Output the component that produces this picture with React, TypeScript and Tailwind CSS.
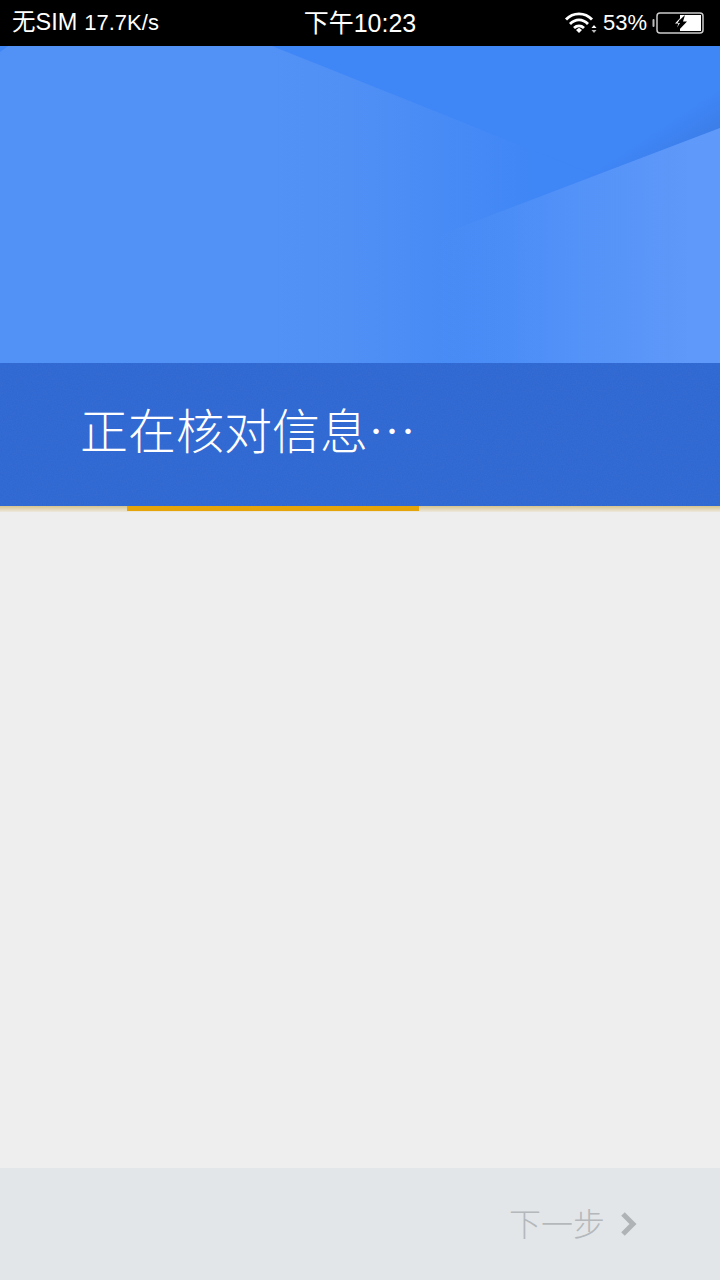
const sans = "font-['Liberation_Sans','Noto_Sans_CJK_SC',sans-serif]";

function WifiIcon() {
  return (
    <svg width="34" height="24" viewBox="0 0 34 24" className="block">
      <path d="M3 8.5C10 1 22 1 29 8.5" fill="none" stroke="#fff" strokeWidth="2.8" />
      <path d="M7 13C12.5 7.5 19.5 7.5 25 13" fill="none" stroke="#fff" strokeWidth="2.8" />
      <path d="M11 17C14 14.2 18 14.2 21 17" fill="none" stroke="#fff" strokeWidth="2.8" />
      <path d="M13 19L16 16.8 19 19 16 22Z" fill="#fff" />
      <path d="M28.5 17L31 14 33.5 17Z" fill="#fff" />
      <path d="M28.5 19L31 22 33.5 19Z" fill="#bbb" />
    </svg>
  );
}

function BatteryIcon() {
  return (
    <svg width="52" height="22" viewBox="0 0 52 22" className="block">
      <rect x="0.5" y="7" width="2" height="8" rx="1" fill="#bbb" />
      <rect x="5" y="1" width="46" height="20" rx="3" fill="#000" stroke="#ccc" strokeWidth="1.5" />
      <rect x="28" y="3" width="21" height="16" fill="#fff" />
      <path d="M33 3L24 11.5H28L26 19L35 9.5H31Z" fill="#000" />
      <path d="M30 4L23 11.5H26.5L25 15.5L28 11H25.5Z" fill="#fff" />
    </svg>
  );
}

function HeroArt() {
  return (
    <svg viewBox="0 0 720 317" className="block h-[317px] w-full" preserveAspectRatio="none">
      <defs>
        <linearGradient id="base" x1="270" y1="0" x2="540" y2="0" gradientUnits="userSpaceOnUse">
          <stop offset="0" stopColor="#5291f5" />
          <stop offset="0.3" stopColor="#5090f5" />
          <stop offset="1" stopColor="#3f86f6" />
        </linearGradient>
        <linearGradient id="shade" x1="620" y1="50" x2="666" y2="119" gradientUnits="userSpaceOnUse">
          <stop offset="0.58" stopColor="#3a7ae2" stopOpacity="0" />
          <stop offset="1" stopColor="#3a7ae2" stopOpacity="0.7" />
        </linearGradient>
        <linearGradient id="low" x1="440" y1="0" x2="690" y2="0" gradientUnits="userSpaceOnUse">
          <stop offset="0" stopColor="#5f99f9" stopOpacity="0" />
          <stop offset="0.5" stopColor="#5f99f9" stopOpacity="0.6" />
          <stop offset="1" stopColor="#5f99f9" />
        </linearGradient>
      </defs>
      <rect width="720" height="317" fill="url(#base)" />
      <polygon points="272,0 720,0 720,179" fill="#3f86f7" />
      <polygon points="500,166 720,82 720,0 500,0" fill="url(#shade)" />
      <polygon points="720,82 400,204 400,317 720,317" fill="url(#low)" />
      <polygon points="0,0 8,0 0,6" fill="#3f86f7" />
    </svg>
  );
}

function BandGrain() {
  return (
    <svg className="absolute inset-0 h-full w-full opacity-[0.03]">
      <filter id="grain">
        <feTurbulence type="fractalNoise" baseFrequency="0.8" numOctaves="2" />
        <feColorMatrix values="0 0 0 0 1  0 0 0 0 1  0 0 0 0 1  1.4 0 0 0 -0.3" />
      </filter>
      <rect width="100%" height="100%" filter="url(#grain)" />
    </svg>
  );
}

export default function App() {
  return (
    <div lang="zh-CN" className={`flex h-[1280px] w-[720px] flex-col overflow-hidden bg-[#eeeeee] ${sans}`}>
      {/* Status bar */}
      <div className="grid h-[46px] grid-cols-3 items-center bg-black pl-3 pr-4 text-white">
        <div className="flex items-baseline whitespace-nowrap text-[23.5px] leading-none">
          无SIM<span className="ml-[7px] text-[22px]">17.7K/s</span>
        </div>
        <div className="whitespace-nowrap pl-[61px] text-[25px] leading-none">下午10:23</div>
        <div className="flex items-center justify-end">
          <WifiIcon />
          <span className="ml-[6px] text-[22px] leading-none">53%</span>
          <div className="ml-[5px]">
            <BatteryIcon />
          </div>
        </div>
      </div>

      {/* Header art */}
      <HeroArt />

      {/* Title band */}
      <div className="relative flex h-[143px] items-center bg-[#2f68d2] pb-[14px] pl-[80px]">
        <BandGrain />
        <h1 className="relative font-['Noto_Sans_CJK_SC',sans-serif] text-[48px] font-light leading-none text-white">
          正在核对信息…
        </h1>
      </div>

      {/* Progress */}
      <div className="h-[6px] bg-gradient-to-b from-[#d8c490] to-[#ece8dc]">
        <div className="ml-[127px] h-[5px] w-[292px] bg-[#e5a50a]" />
      </div>

      <div className="flex-1" />

      {/* Footer */}
      <div className="flex h-[112px] items-center justify-end bg-[#e2e6e9] pr-[80px]">
        <span className="mt-[2px] text-[32px] font-light leading-none text-[#b4b8bb]">下一步</span>
        <svg width="22" height="28" viewBox="0 0 22 28" className="ml-[13px] block">
          <path d="M5 4L15 14 5 24" fill="none" stroke="#afb3b6" strokeWidth="5" />
        </svg>
      </div>
    </div>
  );
}
